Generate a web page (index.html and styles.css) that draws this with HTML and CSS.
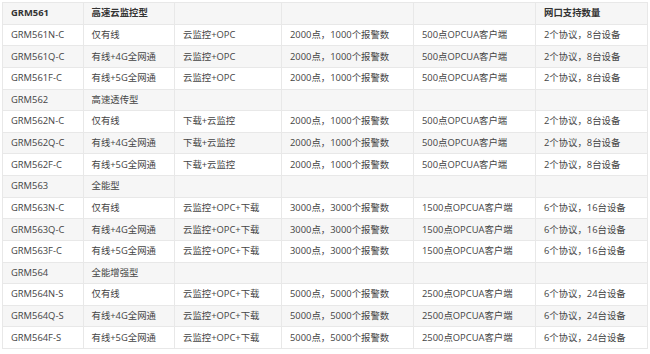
FILE: index.html
```html
<!DOCTYPE html>
<html lang="zh-CN">
<head>
<meta charset="utf-8">
<title>GRM5 系列</title>
<link rel="stylesheet" href="styles.css">
</head>
<body>
<table class="spec">
  <colgroup>
    <col class="c1"><col class="c2"><col class="c3"><col class="c4"><col class="c5"><col class="c6">
  </colgroup>
  <tbody>
    <tr class="group head"><td>GRM561</td><td>高速云监控型</td><td></td><td></td><td></td><td>网口支持数量</td></tr>
    <tr><td>GRM561N-C</td><td>仅有线</td><td>云监控+OPC</td><td>2000点，1000个报警数</td><td>500点OPCUA客户端</td><td>2个协议，8台设备</td></tr>
    <tr><td>GRM561Q-C</td><td>有线+4G全网通</td><td>云监控+OPC</td><td>2000点，1000个报警数</td><td>500点OPCUA客户端</td><td>2个协议，8台设备</td></tr>
    <tr><td>GRM561F-C</td><td>有线+5G全网通</td><td>云监控+OPC</td><td>2000点，1000个报警数</td><td>500点OPCUA客户端</td><td>2个协议，8台设备</td></tr>
    <tr class="group"><td>GRM562</td><td>高速透传型</td><td></td><td></td><td></td><td></td></tr>
    <tr><td>GRM562N-C</td><td>仅有线</td><td>下载+云监控</td><td>2000点，1000个报警数</td><td>500点OPCUA客户端</td><td>2个协议，8台设备</td></tr>
    <tr><td>GRM562Q-C</td><td>有线+4G全网通</td><td>下载+云监控</td><td>2000点，1000个报警数</td><td>500点OPCUA客户端</td><td>2个协议，8台设备</td></tr>
    <tr><td>GRM562F-C</td><td>有线+5G全网通</td><td>下载+云监控</td><td>2000点，1000个报警数</td><td>500点OPCUA客户端</td><td>2个协议，8台设备</td></tr>
    <tr class="group"><td>GRM563</td><td>全能型</td><td></td><td></td><td></td><td></td></tr>
    <tr><td>GRM563N-C</td><td>仅有线</td><td>云监控+OPC+下载</td><td>3000点，3000个报警数</td><td>1500点OPCUA客户端</td><td>6个协议，16台设备</td></tr>
    <tr><td>GRM563Q-C</td><td>有线+4G全网通</td><td>云监控+OPC+下载</td><td>3000点，3000个报警数</td><td>1500点OPCUA客户端</td><td>6个协议，16台设备</td></tr>
    <tr><td>GRM563F-C</td><td>有线+5G全网通</td><td>云监控+OPC+下载</td><td>3000点，3000个报警数</td><td>1500点OPCUA客户端</td><td>6个协议，16台设备</td></tr>
    <tr class="group"><td>GRM564</td><td>全能增强型</td><td></td><td></td><td></td><td></td></tr>
    <tr><td>GRM564N-S</td><td>仅有线</td><td>云监控+OPC+下载</td><td>5000点，5000个报警数</td><td>2500点OPCUA客户端</td><td>6个协议，24台设备</td></tr>
    <tr><td>GRM564Q-S</td><td>有线+4G全网通</td><td>云监控+OPC+下载</td><td>5000点，5000个报警数</td><td>2500点OPCUA客户端</td><td>6个协议，24台设备</td></tr>
    <tr><td>GRM564F-S</td><td>有线+5G全网通</td><td>云监控+OPC+下载</td><td>5000点，5000个报警数</td><td>2500点OPCUA客户端</td><td>6个协议，24台设备</td></tr>
  </tbody>
</table>
</body>
</html>
```

FILE: styles.css
```css
html, body {
  margin: 0;
  padding: 0;
  background: #ffffff;
}
body {
  padding: 2px 0 0 2px;
  font-family: "Open Sans", "Noto Sans CJK SC", sans-serif;
  font-size: 9.4px;
  color: #444444;
}
.spec {
  border-collapse: collapse;
  table-layout: fixed;
  width: 645px;
}
.c1 { width: 80.5px; }
.c2 { width: 91.5px; }
.c3 { width: 107px; }
.c4 { width: 132px; }
.c5 { width: 122px; }
.c6 { width: 112px; }
.spec tr {
  height: 21.625px;
}
.spec td {
  border: 1px solid #e8e8e8;
  padding: 0 8px;
  white-space: nowrap;
  vertical-align: middle;
  line-height: 12px;
}
.spec tr:nth-child(odd) {
  background: #f6f6f6;
}
.spec tr.head td {
  font-weight: 700;
  color: #333333;
}
```
